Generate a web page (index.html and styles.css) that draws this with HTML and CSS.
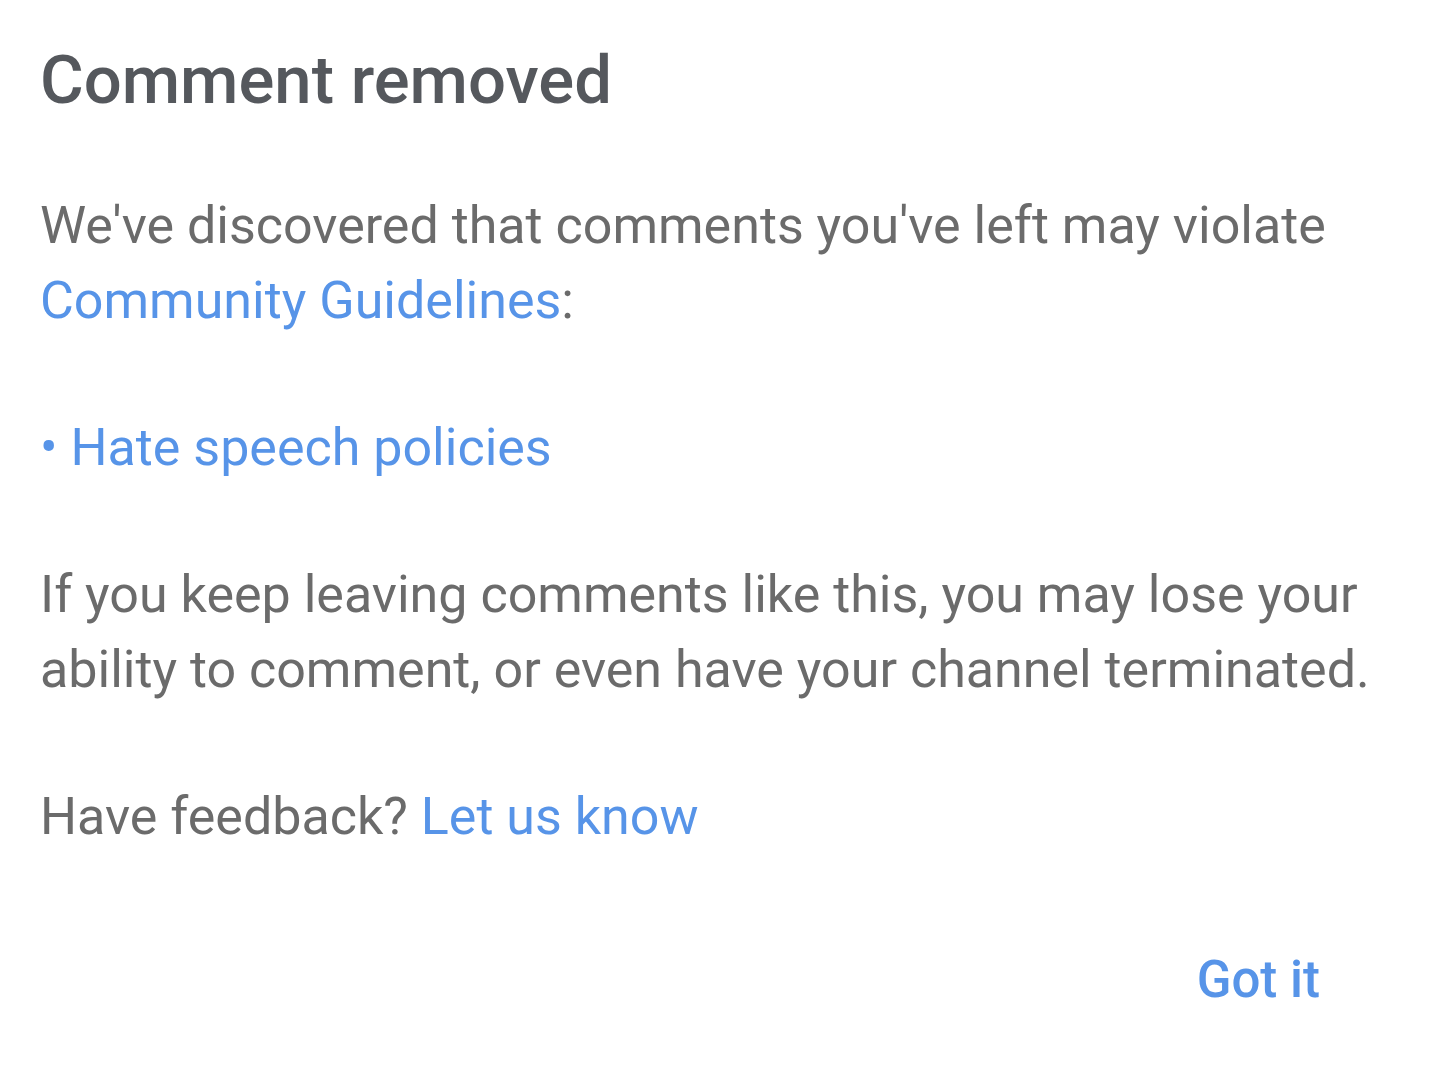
FILE: index.html
```html
<!DOCTYPE html>
<html>
<head>
<meta charset="utf-8">
<link rel="stylesheet" href="styles.css">
</head>
<body>
<div class="dialog">
  <h1 class="title">Comment removed</h1>
  <p class="text first">We've discovered that comments you've left may violate <a class="link" href="#">Community Guidelines</a>:</p>
  <p class="text bullet"><span class="dot">•</span> <a class="link" href="#">Hate speech policies</a></p>
  <p class="text">If you keep leaving comments like this, you may lose your ability to comment, or even have your channel terminated.</p>
  <p class="text">Have feedback? <a class="link" href="#">Let us know</a></p>
  <div class="actions"><button class="btn">Got it</button></div>
</div>
</body>
</html>
```
FILE: styles.css
```css
html, body {
  margin: 0;
  padding: 0;
  background: #ffffff;
}
.dialog {
  width: 1445px;
  height: 1080px;
  box-sizing: border-box;
  padding: 40px 30px 0 40px;
  font-family: Roboto, "Noto Sans", sans-serif;
}
.title {
  margin: 0;
  font-size: 67px;
  line-height: 80px;
  font-weight: 500;
  color: #55585d;
}
.text {
  margin: 72px 0 0 0;
  font-size: 52px;
  line-height: 75px;
  font-weight: 400;
  color: #6b6b6b;
}
.text.first {
  margin-top: 68px;
}
.link {
  color: #5794e8;
  text-decoration: none;
}
.dot {
  color: #5794e8;
}
.actions {
  margin-top: 88px;
  padding-right: 95px;
  display: flex;
  justify-content: flex-end;
}
.btn {
  border: 0;
  background: none;
  padding: 0;
  font-family: Roboto, "Noto Sans", sans-serif;
  font-size: 51px;
  line-height: 75px;
  font-weight: 500;
  color: #5794e8;
}
```
